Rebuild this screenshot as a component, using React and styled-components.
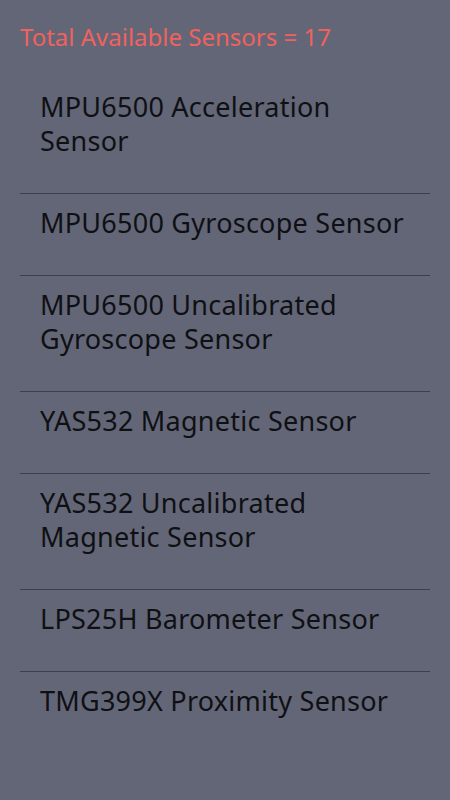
import React from "react";
import styled, { createGlobalStyle } from "styled-components";

const sensors = [
  "MPU6500 Acceleration Sensor",
  "MPU6500 Gyroscope Sensor",
  "MPU6500 Uncalibrated Gyroscope Sensor",
  "YAS532 Magnetic Sensor",
  "YAS532 Uncalibrated Magnetic Sensor",
  "LPS25H Barometer Sensor",
  "TMG399X Proximity Sensor",
];

const GlobalStyle = createGlobalStyle`
  html, body {
    margin: 0;
    padding: 0;
    background: #636676;
  }
  body {
    font-family: "Noto Sans", "Open Sans", sans-serif;
  }
`;

const Screen = styled.div`
  width: 450px;
  height: 800px;
  overflow: hidden;
  background: #636676;
`;

const Header = styled.div`
  height: 78px;
  box-sizing: border-box;
  padding: 22px 20px 0;
  color: #f0625e;
  font-size: 24px;
  line-height: 30px;
`;

const List = styled.ul`
  list-style: none;
  margin: 0 20px;
  padding: 0;
`;

const Item = styled.li`
  padding: 12px 20px 35px;
  font-size: 27px;
  line-height: 34px;
  letter-spacing: 0.25px;
  color: #0f1014;
  border-top: ${(p) => (p.first ? "none" : "1px solid #3d3f4b")};
`;

export default function App() {
  return (
    <Screen>
      <GlobalStyle />
      <Header>Total Available Sensors = 17</Header>
      <List>
        {sensors.map((s, i) => (
          <Item key={s} first={i === 0}>
            {s}
          </Item>
        ))}
      </List>
    </Screen>
  );
}
